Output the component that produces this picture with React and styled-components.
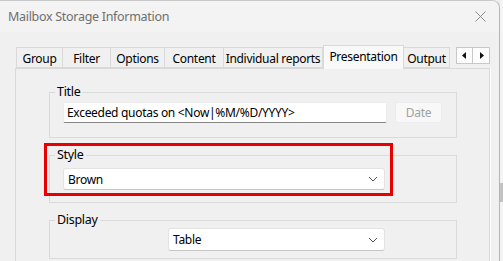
import React from "react";
import styled, { createGlobalStyle } from "styled-components";

const Global = createGlobalStyle`
  html, body { margin: 0; padding: 0; background: #ececec; }
  body { font-family: "Noto Sans", "Open Sans", sans-serif; font-size: 12px; letter-spacing: -0.3px; color: #000; }
  #root { width: 503px; height: 261px; overflow: hidden; }
`;

const Screen = styled.div`
  display: flex;
  width: 503px;
  height: 261px;
  overflow: hidden;
`;

const Window = styled.div`
  width: 499px;
  flex: none;
  display: flex;
  flex-direction: column;
  border-top: 1px solid #c9c9c9;
  border-right: 1px solid #b5b5b5;
  border-top-right-radius: 8px;
  overflow: hidden;
  background: #f0f0f0;
`;

const Edge = styled.div`
  flex: 1;
  display: flex;
  flex-direction: column;
  background: #f4f4f4;
  padding-top: 183px;
`;

const EdgeThumb = styled.div`
  height: 19px;
  background: #c2c2c2;
`;

const TitleBar = styled.div`
  height: 31px;
  flex: none;
  display: flex;
  align-items: center;
  justify-content: space-between;
  padding: 0 13px 0 8px;
  background: #f3f3f3;
  color: #6f6f6f;
  font-size: 12.5px;
`;

const Body = styled.div`
  flex: 1;
  padding: 13px 9px 0 15px;
  display: flex;
  flex-direction: column;
`;

const TabStrip = styled.div`
  display: flex;
  align-items: flex-end;
  height: 23px;
  padding-left: 1px;
`;

const Tab = styled.div`
  box-sizing: border-box;
  width: ${(p) => p.$w}px;
  height: ${(p) => (p.$active ? 24 : 21)}px;
  margin-bottom: ${(p) => (p.$active ? -1 : 0)}px;
  display: flex;
  align-items: ${(p) => (p.$active ? "flex-start" : "center")};
  padding-top: ${(p) => (p.$active ? 2 : 1)}px;
  justify-content: center;
  border: 1px solid #d9d9d9;
  border-bottom: ${(p) => (p.$active ? "none" : "1px solid #d9d9d9")};
  border-left: ${(p) => (p.$first || p.$active ? "1px solid #d9d9d9" : "none")};
  background: ${(p) => (p.$active ? "#f9f9f9" : "#f0f0f0")};
  white-space: nowrap;
  position: relative;
  z-index: ${(p) => (p.$active ? 1 : 0)};
`;

const Spacer = styled.div`
  flex: 1;
`;

const Scroller = styled.div`
  display: flex;
  align-self: flex-start;
  margin-top: 2px;
`;

const ScrollBtn = styled.div`
  box-sizing: border-box;
  width: 17px;
  height: 17px;
  background: #fdfdfd;
  border: 1px solid #c8c8c8;
  border-left: ${(p) => (p.$right ? "none" : "1px solid #c8c8c8")};
  display: flex;
  align-items: center;
  justify-content: center;
`;

const Panel = styled.div`
  flex: 1;
  box-sizing: border-box;
  border: 1px solid #d9d9d9;
  border-bottom: none;
  box-shadow: 1px 0 0 #ffffff;
  background: #f0f0f0;
  padding: 15px 32px 0 33px;
  display: flex;
  flex-direction: column;
  gap: 9px;
  position: relative;
`;

const Group = styled.fieldset`
  margin: 0;
  border: 1px solid #dadada;
  border-radius: 0;
  padding: ${(p) => p.$pad};
  min-width: 0;
  display: flex;
  align-items: center;
  gap: 8px;
`;

const Legend = styled.legend`
  padding: 0 2px;
  margin-left: -8px;
  font-size: 12.5px;
  line-height: 16px;
`;

const TextBox = styled.div`
  box-sizing: border-box;
  width: 324px;
  height: 21px;
  background: #ffffff;
  border: 1px solid #ececec;
  border-bottom: 1px solid #858585;
  border-radius: 2px;
  padding: 0 3px;
  display: flex;
  align-items: center;
  font-size: 12px;
  white-space: nowrap;
  overflow: hidden;
`;

const Button = styled.div`
  box-sizing: border-box;
  width: 47px;
  height: 21px;
  background: #f8f8f8;
  border: 1px solid #ececec;
  border-radius: 3px;
  color: #a2a2a2;
  display: flex;
  align-items: center;
  justify-content: center;
  font-size: 12px;
`;

const Select = styled.div`
  box-sizing: border-box;
  width: ${(p) => p.$w}px;
  margin-left: ${(p) => p.$ml || 0}px;
  height: ${(p) => p.$h || 22}px;
  background: #ffffff;
  border: 1px solid #e3e3e3;
  border-bottom: 1px solid #c6c6c6;
  border-radius: 3px;
  padding: 0 6px 0 4px;
  display: flex;
  align-items: center;
  justify-content: space-between;
  font-size: 12px;
`;

const Highlight = styled.div`
  position: absolute;
  left: 28px;
  top: 74px;
  width: 349px;
  height: 53px;
  box-sizing: border-box;
  border: 3px solid #e80000;
  pointer-events: none;
`;

const Chevron = () => (
  <svg width="10" height="6" viewBox="0 0 10 6">
    <path d="M1 1 L5 5 L9 1" fill="none" stroke="#555" strokeWidth="1" />
  </svg>
);

const Tri = ({ dir }) => (
  <svg width="5" height="7" viewBox="0 0 5 7">
    {dir === "left" ? (
      <path d="M4 0 L0 3.5 L4 7 Z" fill="#111" />
    ) : (
      <path d="M1 0 L5 3.5 L1 7 Z" fill="#111" />
    )}
  </svg>
);

const CloseIcon = () => (
  <svg width="11" height="11" viewBox="0 0 11 11">
    <path d="M0.5 0.5 L10.5 10.5 M10.5 0.5 L0.5 10.5" stroke="#8a8a8a" strokeWidth="1" fill="none" />
  </svg>
);

const tabs = [
  { label: "Group", w: 47 },
  { label: "Filter", w: 48 },
  { label: "Options", w: 54 },
  { label: "Content", w: 59 },
  { label: "Individual reports", w: 99 },
  { label: "Presentation", w: 81, active: true },
  { label: "Output", w: 46 },
];

export default function App() {
  return (
    <>
      <Global />
      <Screen>
        <Window>
          <TitleBar>
            <span>Mailbox Storage Information</span>
            <CloseIcon />
          </TitleBar>
          <Body>
            <TabStrip>
              {tabs.map((t, i) => (
                <Tab key={t.label} $w={t.w} $active={t.active} $first={i === 0}>
                  {t.label}
                </Tab>
              ))}
              <Spacer />
              <Scroller>
                <ScrollBtn><Tri dir="left" /></ScrollBtn>
                <ScrollBtn $right><Tri dir="right" /></ScrollBtn>
              </Scroller>
            </TabStrip>
            <Panel>
              <Group $pad="2px 14px 14px 13px">
                <Legend>Title</Legend>
                <TextBox>Exceeded quotas on &lt;Now|%M/%D/YYYY&gt;</TextBox>
                <Button>Date</Button>
              </Group>
              <Group $pad="5px 14px 12px 13px">
                <Legend>Style</Legend>
                <Select $w={322}>
                  <span>Brown</span>
                  <Chevron />
                </Select>
              </Group>
              <Group $pad="0px 14px 7px 13px">
                <Legend>Display</Legend>
                <Select $w={217} $ml={105} $h={23}>
                  <span>Table</span>
                  <Chevron />
                </Select>
              </Group>
              <Highlight />
            </Panel>
          </Body>
        </Window>
        <Edge>
          <EdgeThumb />
        </Edge>
      </Screen>
    </>
  );
}
